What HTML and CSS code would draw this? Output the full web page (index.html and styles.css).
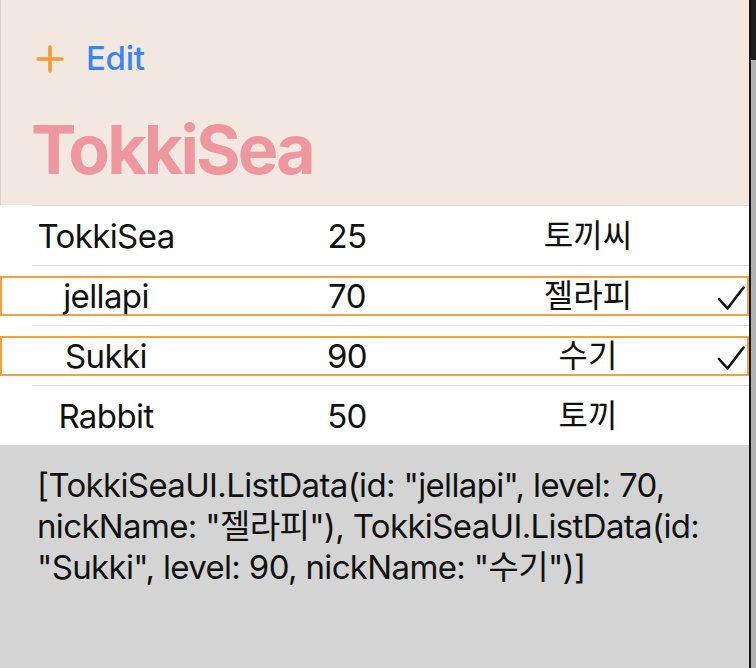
FILE: index.html
```html
<!DOCTYPE html>
<html lang="ko">
<head>
<meta charset="utf-8">
<title>TokkiSea</title>
<link rel="stylesheet" href="styles.css">
</head>
<body>
<div class="screen">
  <main class="app">
    <header class="nav">
      <div class="toolbar">
        <svg class="plus" width="28" height="28" viewBox="0 0 28 28" aria-hidden="true">
          <path d="M14 2 V26 M2 14 H26" fill="none" stroke="#f29b37" stroke-width="3.6" stroke-linecap="round"/>
        </svg>
        <span class="edit">Edit</span>
      </div>
      <h1 class="title">TokkiSea</h1>
    </header>

    <section class="list">
      <div class="row">
        <div class="cells">
          <span class="name">TokkiSea</span><span class="level">25</span><span class="nick">토끼씨</span><span class="check"></span>
        </div>
      </div>
      <div class="row">
        <div class="cells selected">
          <span class="name">jellapi</span><span class="level">70</span><span class="nick">젤라피</span>
          <svg class="check" width="30" height="26" viewBox="0 0 30 26" aria-hidden="true"><path d="M3 13 L11.5 22.5 L27.5 1.5" fill="none" stroke="#111" stroke-width="2.6" stroke-linecap="round" stroke-linejoin="round"/></svg>
        </div>
      </div>
      <div class="row">
        <div class="cells selected">
          <span class="name">Sukki</span><span class="level">90</span><span class="nick">수기</span>
          <svg class="check" width="30" height="26" viewBox="0 0 30 26" aria-hidden="true"><path d="M3 13 L11.5 22.5 L27.5 1.5" fill="none" stroke="#111" stroke-width="2.6" stroke-linecap="round" stroke-linejoin="round"/></svg>
        </div>
      </div>
      <div class="row">
        <div class="cells">
          <span class="name">Rabbit</span><span class="level">50</span><span class="nick">토끼</span><span class="check"></span>
        </div>
      </div>
    </section>

    <section class="output">
      <p>[TokkiSeaUI.ListData(id: "jellapi", level: 70, nickName: "젤라피"), TokkiSeaUI.ListData(id: "Sukki", level: 90, nickName: "수기")]</p>
    </section>
  </main>
  <div class="edge"></div>
</div>
</body>
</html>
```

FILE: styles.css
```css
* { box-sizing: border-box; }

html, body {
  margin: 0;
  padding: 0;
  background: #b4b4b4;
}

body {
  font-family: Inter, "Noto Sans CJK KR", "Noto Sans", sans-serif;
  color: #111;
}

.screen {
  display: flex;
  width: 756px;
  height: 668px;
  overflow: hidden;
}

.app {
  width: 749px;
  height: 668px;
  display: flex;
  flex-direction: column;
  background: #d4d4d4;
  box-shadow: inset 1px 0 0 #d6cec6;
}

.edge {
  flex: 1;
  border-left: 2px solid #151515;
  background: linear-gradient(#1e1e1e 0, #1e1e1e 60px, #b3b3b3 60px);
}

/* header */
.nav {
  height: 205px;
  background: #f2e8df;
  padding: 36px 0 0 36px;
  box-shadow: inset 1px 0 0 #d9d1c9;
}

.toolbar {
  height: 44px;
  display: flex;
  align-items: center;
  gap: 22px;
}

.plus { display: block; margin-top: 1px; }

.edit {
  font-size: 33px;
  font-weight: 500;
  color: #3a85f5;
  letter-spacing: -0.3px;
}

.title {
  margin: 28px 0 0 -5px;
  font-size: 68px;
  line-height: 82px;
  font-weight: 700;
  color: #ee97a0;
  letter-spacing: -2.8px;
}

/* list */
.list {
  background: #ffffff;
}

.row {
  height: 60px;
  display: flex;
  align-items: center;
  background: linear-gradient(#dadada, #dadada) 32px 0 / calc(100% - 32px) 1px no-repeat, #fff;
}

.cells {
  width: 100%;
  height: 40px;
  margin-top: 1px;
  padding-bottom: 7px;
  display: grid;
  grid-template-columns: 208px 274px 208px 1fr;
  align-items: center;
  border: 2px solid transparent;
  font-size: 33px;
  line-height: 36px;
  letter-spacing: -0.6px;
}

.cells.selected { border-color: #f3a13f; }

.name, .level, .nick { text-align: center; }

.nick { font-size: 32px; letter-spacing: 0; }

.check {
  justify-self: end;
  align-self: center;
  margin: 6px 1px 0 0;
  width: 30px;
  height: 26px;
  display: block;
}

/* output */
.output {
  flex: 1;
  background: #d4d4d4;
  padding: 20px 30px 0 37px;
}

.output p {
  margin: 0;
  font-size: 33px;
  line-height: 41px;
  letter-spacing: -0.65px;
  color: #111;
}
```
